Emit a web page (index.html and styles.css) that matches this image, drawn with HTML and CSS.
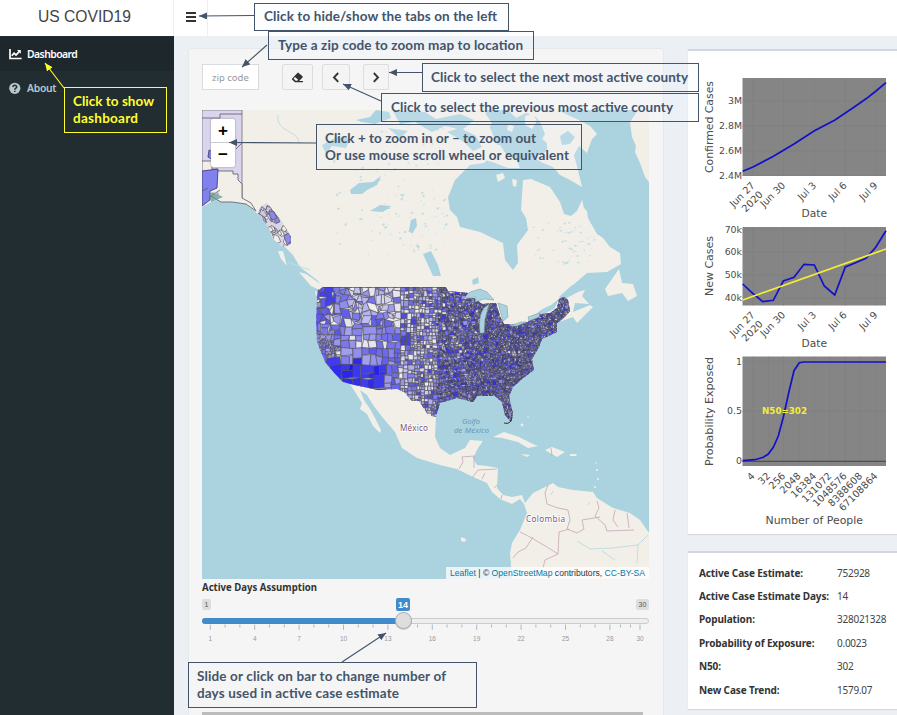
FILE: index.html
```html
<!DOCTYPE html>
<html lang="en">
<head>
<meta charset="utf-8">
<title>US COVID19</title>
<link rel="stylesheet" href="styles.css">
</head>
<body>
<header class="topbar">
  <div class="logo"><svg width="94" height="20"><text x="0" y="16" textLength="93" lengthAdjust="spacingAndGlyphs">US COVID19</text></svg></div>
  <button class="menu" aria-label="Menu"><i></i><i></i><i></i></button>
</header>
<div class="shell">
  <nav class="sidebar">
    <a class="tab active"><svg width="13" height="11" viewBox="0 0 13 11"><path d="M1 0V9.5H12.6" fill="none" stroke="#fff" stroke-width="1.7"/><path d="M2.8 6.7 5 4.2 7 6 10.2 2.6" fill="none" stroke="#fff" stroke-width="1.7"/><path d="M8 1H11.8V4.8Z" fill="#fff"/></svg><span class="dash">Dashboard</span></a>
    <a class="tab"><svg width="13" height="13" viewBox="0 0 13 13"><circle cx="5.8" cy="6.3" r="5.6" fill="#b8c7ce"/><path d="M3.9 5.1C3.9 2.7 7.8 2.8 7.7 5 7.6 6.3 5.8 6.2 5.8 7.8M5.8 8.7V10" fill="none" stroke="#222d32" stroke-width="1.5"/></svg><span>About</span></a>
  </nav>
  <main class="content">
    <section class="panel">
      <div class="tools">
        <div class="zip">zip code</div>
        <button class="btn erase" aria-label="Clear"><svg width="13" height="11" viewBox="0 0 13 11"><path d="M6.4.9Q7 .3 7.7.9L11.5 4.2Q12 4.8 11.5 5.4L8.2 8.9H12V10.2H4L1.2 7.8Q.6 7.2 1.2 6.5ZM4 5.1 2.6 6.8 4.7 8.8H6.2L7.2 7.8Z" fill="#333" fill-rule="evenodd"/></svg></button>
        <button class="btn prev" aria-label="Previous"><svg width="8" height="11" viewBox="0 0 8 11"><path d="M6.2 1 2 5.4 6.2 9.8" fill="none" stroke="#333" stroke-width="1.9"/></svg></button>
        <button class="btn next" aria-label="Next"><svg width="8" height="11" viewBox="0 0 8 11"><path d="M1.8 1 6 5.4 1.8 9.8" fill="none" stroke="#333" stroke-width="1.9"/></svg></button>
      </div>
      <div class="map">
        <svg id="map" width="447" height="469" viewBox="202 110 447 469">
          <defs>
            <clipPath id="us"><path d="M323 287H446L448 291 468 293 464 299 474 298 482 304 496 303 500 316 504 324 517 325 528 322 534 315 550 313 557 308 559 299 564 297 568 300 570 311 564 318 557 323 557 332 542 339 539 347 532 359 534 370 523 378 513 387 509 396 513 414 511 422 505 415 502 402 495 396 477 396 473 402 457 398 440 403 436 417 428 415 419 401 412 401 404 392 397 389 378 390 350 384 343 382 335 374 325 362 317 342 316 323 317 298 315 292Z"/></clipPath>
            <clipPath id="panhandle"><path d="M261 206 267 203 272 209 281 220 291 237 291 243 286 247 281 246 274 240 269 229 258 213Z"/></clipPath>
          </defs>
          <path fill="#aad3df" d="M202 110H649V579H202Z"/>
          <path fill="#f2efe9" d="M202 110H485L490 128 500 150 490 157 484 163 470 165 455 180 448 197 450 210 457 217 460 227 480 232 503 243 505 260 513 270 518 263 517 245 528 230 526 218 521 210 523 180 531 179 550 187 560 202 564 214 571 216 577 211 582 200 584 208 587 211 588 218 593 227 597 234 603 238 610 247 620 253 621 264 607 272 587 273 573 285 560 298 575 290 586 288 582 296 589 304 575 303 573 312 590 305 593 307 577 323 573 317 556 323 557 332 542 339 532 359 534 370 523 378 513 387 509 396 513 414 511 422 505 415 502 402 495 396 477 396 473 402 457 398 440 403 436 417 435 437 440 448 450 455 465 448 470 440 483 441 478 448 473 458 477 465 487 466 498 468 497 488 503 495 512 497 522 495 525 503 533 493 543 488 553 483 558 487 573 490 593 492 597 498 613 508 630 513 640 520 649 533V579H512L510 553 512 543 520 530 527 513 524 504 520 499 512 504 500 499 492 492 487 483 473 477 457 469 440 465 417 458 402 448 395 432 383 418 373 405 367 395 360 390 364 400 370 409 375 418 381 430 380 433 373 426 367 414 360 409 362 403 350 384 343 382 335 374 325 362 317 342 316 323 317 298 315 292 323 287 317 280 300 267 293 255 284 246 272 237 267 225 257 213 250 207 243 202 233 202 222 198 211 202 202 207Z"/>
          <g fill="#f2efe9">
            <path d="M505 110H560L575 118 590 126 597 134 592 139 587 153 579 146 574 155 578 170 582 187 570 180 560 175 553 167 543 163 534 158 547 151 547 143 540 137 540 127 528 119 515 124Z"/>
            <path d="M638 110 634 116 630 122 632 137 636 146 635 152 640 163 645 177 649 182V110ZM478 122 487 116 493 123 487 129ZM496 175 503 173 505 178 498 182ZM512 179 517 180 516 187 513 186ZM484 144 500 145 508 157 516 158 520 168 508 168 495 163 482 159Z"/>
            <path d="M619 269 612 279 605 289 608 296 622 293 628 301 637 296 633 284 622 283ZM585 280 595 282 593 286ZM278 251 283 251 287 266 281 259ZM299 272 306 274 322 285 322 291 311 286ZM493 437 504 432 519 437 533 444 538 446 528 448 518 442 502 438ZM545 450 552 447 565 452 557 457ZM521 454 530 455 527 457ZM570 454 577 454 576 456 570 456ZM461 537 466 539 465 542 461 541Z"/>
          </g>
          <g fill="#aad3df">
            <path d="M356 120 370 117 376 110 389 112 391 118 375 124 362 122ZM393 111 425 112 436 119 460 114 474 120 462 130 445 126 432 132 415 122 400 124ZM322 145 337 137 350 139 346 148 332 146 326 154ZM350 190 359 183 373 182 381 176 377 185 367 190 362 194 351 194ZM370 211 380 205 391 206 383 212ZM411 220 416 218 417 226 412 234 409 230ZM423 254 431 251 438 265 441 276 433 276ZM381 208 391 208 383 211ZM472 280 478 277 479 283 473 285Z"/>
            <path d="M485 110H508L516 118 526 113 536 117 541 124 545 134 540 143 530 146 520 140 511 146 500 139 494 128ZM558 110H582L596 116 606 122 598 127 586 122 572 117ZM560 136 568 131 575 137 570 144 562 145ZM447 132 460 128 476 136 482 147 473 151 464 142ZM388 128 408 131 400 138Z"/>
            <path d="M559 297 571 286 588 278 605 275 600 289 588 289 578 292 563 300Z"/>
            <path d="M535 315Q541 309 551 305L560 298 554 309 535 318Z"/>
          </g>
          <path fill="#f2efe9" d="M525 116 533 114 537 121 532 129 525 125ZM508 124 514 126 512 132 507 130Z"/>
          <g id="lakes" fill="#aad3df"></g>
          <path fill="none" stroke="#c2dde2" stroke-width="1" d="M288 262 310 270M577 541 590 549 612 548 638 545 648 535M602 551 615 560M638 545 637 563M551 495 553 491M588 505 590 502M278 115Q276 125 288 131T299 143"/>
          <g class="counties" clip-path="url(#us)"><g id="counties"></g></g>
          <g clip-path="url(#panhandle)"><path d="M255 200H295V250H255Z" fill="#d9d6e6"/><g id="islands"></g></g>
          <path fill="#dad4ec" stroke="#75707b" stroke-width=".8" d="M202 110H242V198L235 186 233 183 222 182 217 169H202Z"/>
          <path fill="#f2efe9" stroke="#5b5963" stroke-width=".8" d="M202 161H212V171H233V174H238V180L242 184V198L251 203 256 211 246 204 232 202H221L211 196 202 204Z"/>
          <path fill="#8280ec" stroke="#34326d" stroke-width=".8" d="M202 171 218 169 217 188 210 191V200L202 206ZM209 150 213 152 213 160 208 157Z"/>
          <path fill="none" stroke="#5b5963" stroke-width=".8" d="M202 118H220V114H242M242 143 236 149M202 191 208 188M211 196 220 190"/>
          <path fill="#5d9390" opacity=".7" d="M209 194 213 192 216 194 218 192 219 195 223 197 216 200 211 202Z"/>
          <path fill="#aad3df" stroke="#76929c" stroke-width=".5" d="M464 298 470 292 480 289 487 292 494 300 484 299 475 302 476 297ZM480 333Q478 316 484 308L489 304 485 319 484 333ZM498 303 507 306 508 317 503 321ZM509 326 521 322 526 322 517 326ZM528 317 540 313 539 317 529 321Z"/>
          <g fill="none" stroke="#c7a4b5" stroke-width=".8"><path d="M459 469 463 462 462 457 474 456V468M472 478 478 470 497 469M482 479 485 473M494 488 497 485M501 499 502 495M548 485 545 493 547 504 558 508 568 510 570 520 567 529 577 533 584 529 582 520 600 517M597 501 599 508 595 516 605 525 607 531 634 530M615 510 613 520 618 527M627 513 629 528M520 532 530 537 547 547 558 554 545 560 543 568M533 537 526 548 518 552 513 558M569 529 559 532 558 554M551 448 552 456"/></g>
          <g fill="#f2efe9"><circle cx="522" cy="425" r="1.4"/><circle cx="528" cy="417" r=".8"/><circle cx="597" cy="470" r="1"/><circle cx="598" cy="479" r="1"/><circle cx="595" cy="487" r="1"/><circle cx="596" cy="463" r=".8"/></g>
          <path d="M504 423Q511 425 512 417" stroke="#333" fill="none"/>
          <g class="place"><text x="400" y="431" textLength="28">México</text><text x="526" y="522" textLength="39">Colombia</text></g>
          <g class="sea"><text x="462" y="424" textLength="18">Golfo</text><text x="454" y="433" textLength="35">de México</text></g>
        </svg>
        <div class="zoom"><span>+</span><span>−</span></div>
        <div class="credit"><svg width="196" height="12"><text y="9" textLength="195" lengthAdjust="spacingAndGlyphs"><tspan class="link">Leaflet</tspan> | © <tspan class="link">OpenStreetMap</tspan> contributors, <tspan class="link">CC-BY-SA</tspan></text></svg></div>
      </div>
      <svg class="slider" id="slider" width="447" height="68" viewBox="202 579 447 68">
        <text class="slabel" x="202" y="591" textLength="115" lengthAdjust="spacingAndGlyphs">Active Days Assumption</text>
        <rect x="202" y="599" width="9" height="11" rx="2" fill="#ddd"/><text class="pill" x="206.5" y="607">1</text>
        <rect x="636" y="599" width="13" height="11" rx="2" fill="#ddd"/><text class="pill" x="642.5" y="607">30</text>
        <rect x="202.5" y="618.5" width="446" height="5" rx="2.5" fill="#eee" stroke="#ccc"/>
        <path d="M205 618H404V624H205A3 3 0 0 1 205 618" fill="#428bca"/>
        <g id="ticks"></g>
        <circle cx="403.5" cy="621.5" r="8.5" fill="#aaa" opacity=".5"/><circle cx="403.5" cy="620.5" r="8" fill="#dedede" stroke="#aaa"/>
        <rect x="396" y="598" width="14" height="13" rx="2" fill="#428bca"/><text class="pill now" x="403" y="608">14</text>
      </svg>
      <div class="scroll"></div>
    </section>
    <aside class="side">
      <section class="card charts"><svg id="charts" width="209" height="483" viewBox="688 51 209 483"></svg></section>
      <section class="card stats">
        <dl>
          <dt>Active Case Estimate:</dt><dd>752928</dd>
          <dt>Active Case Estimate Days:</dt><dd>14</dd>
          <dt>Population:</dt><dd>328021328</dd>
          <dt>Probability of Exposure:</dt><dd>0.0023</dd>
          <dt>N50:</dt><dd>302</dd>
          <dt>New Case Trend:</dt><dd>1579.07</dd>
        </dl>
      </section>
    </aside>
  </main>
</div>
<svg class="notes" width="897" height="715" viewBox="0 0 897 715">
  <defs>
    <marker id="a" markerUnits="userSpaceOnUse" markerWidth="10" markerHeight="8" refX="8" refY="3.5" orient="auto"><path d="M0 0 8 3.5 0 7Z" fill="#44546a"/></marker>
    <marker id="y" markerUnits="userSpaceOnUse" markerWidth="10" markerHeight="8" refX="8" refY="3.5" orient="auto"><path d="M0 0 8 3.5 0 7Z" fill="#ffff2d"/></marker>
  </defs>
  <g class="boxes">
    <rect x="254.5" y="3.5" width="254" height="27"/><rect x="268.5" y="31.5" width="265" height="28"/><rect x="422.5" y="63.5" width="276" height="28"/><rect x="381.5" y="93.5" width="317" height="28"/><rect x="316.5" y="124.5" width="265" height="45"/><rect class="solid" x="188.5" y="662.5" width="288" height="45"/>
  </g>
  <g class="arrows">
    <path d="M254 15.5 199 16" marker-end="url(#a)"/><path d="M267 45 242 67" marker-end="url(#a)"/><path d="M422 72.5H389" marker-end="url(#a)"/><path d="M381 101 343 84" marker-end="url(#a)"/><path d="M316 143 229 142.5" marker-end="url(#a)"/><path d="M342 662 386 633" marker-end="url(#a)"/>
  </g>
  <g class="words">
    <text x="264" y="21" textLength="233">Click to hide/show the tabs on the left</text>
    <text x="278" y="50" textLength="245">Type a zip code to zoom map to location</text>
    <text x="431" y="82" textLength="257">Click to select the next most active county</text>
    <text x="391" y="112" textLength="282">Click to select the previous most active county</text>
    <text x="325" y="143" textLength="211">Click + to zoom in or – to zoom out</text>
    <text x="325" y="160" textLength="244">Or use mouse scroll wheel or equivalent</text>
    <text x="197" y="681" textLength="249">Slide or click on bar to change number of</text>
    <text x="197" y="698" textLength="202">days used in active case estimate</text>
  </g>
  <rect x="64.5" y="87.5" width="102" height="45" fill="none" stroke="#ffff2d"/>
  <path d="M64 88 45 63" stroke="#ffff2d" stroke-width="1.1" marker-end="url(#y)"/>
  <g class="words yellow"><text x="73" y="106" textLength="81">Click to show</text><text x="73" y="123" textLength="65">dashboard</text></g>
</svg>
<script src="script.js"></script>
</body>
</html>
```
FILE: styles.css
```css
* { box-sizing: border-box; }
body { margin: 0; width: 897px; height: 715px; overflow: hidden; background: #ecf0f5; font-family: "Noto Sans", sans-serif; color: #333; position: relative; }
svg { display: block; }
button { padding: 0; font: inherit; }
.topbar { display: flex; height: 36px; background: #fff; }
.logo { width: 174px; padding: 6px 0 0 38px; border-right: 1px solid #eee; font-family: "Liberation Sans", sans-serif; font-size: 16px; }
.logo text { fill: #444; }
.menu { width: 34px; border: 0; border-right: 1px solid #eee; background: none; display: flex; flex-direction: column; gap: 2px; padding: 12px 0 0 12px; }
.menu i { width: 10px; height: 2px; background: #333; }
.shell { display: flex; height: 679px; }
.sidebar { width: 174px; background: #222d32; padding-top: 1px; }
.tab { height: 34px; display: flex; align-items: center; gap: 5px; padding-left: 9px; font-size: 10.4px; font-weight: 600; color: #b8c7ce; letter-spacing: -.3px; }
.tab svg { flex: none; }
.dash { letter-spacing: -.55px; }
.active { background: #1e282c; color: #fff; }
.content { flex: 1; display: flex; padding: 12px 0 0 14px; gap: 24px; }
.panel { width: 476px; height: 680px; padding: 15px 14px 0 13px; border: 1px solid #e6e8ea; border-radius: 3px; background: #f5f5f5; overflow: hidden; }
.tools { display: flex; height: 26px; margin-bottom: 20px; }
.zip { width: 57px; border: 1px solid #d8dbe0; background: #fff; padding-left: 9px; font-size: 9.5px; line-height: 25px; color: #999; white-space: nowrap; overflow: hidden; }
.btn { border: 1px solid #ddd; border-radius: 2px; background: #f4f4f4; display: flex; align-items: center; justify-content: center; }
.erase { width: 31px; margin-left: 23px; }
.prev { width: 28px; margin-left: 9px; }
.next { width: 26px; margin-left: 13px; }
.map { position: relative; width: 447px; height: 469px; overflow: hidden; }
.place text { font: 8.2px "Noto Sans", sans-serif; fill: #805676; stroke: #fff; stroke-width: 1.4px; paint-order: stroke; }
.sea text { font: italic 7.6px "Noto Sans", sans-serif; fill: #6597b5; }
.zoom { position: absolute; left: 9px; top: 9px; width: 24px; border-radius: 2px; background: #fff; box-shadow: 0 0 2px #888; font: bold 17px/23px "Liberation Sans", sans-serif; color: #000; text-align: center; }
.zoom span { display: block; height: 24px; }
.zoom span:first-child { border-bottom: 1px solid #ccc; }
.credit { position: absolute; right: 0; bottom: 0; height: 12px; padding-left: 4px; width: 203px; background: rgba(255,255,255,.75); font: 8.5px "Liberation Sans", sans-serif; }
.credit text { fill: #333; }
.credit .link { fill: #0078a8; }
.slabel { font: 700 10.4px "Noto Sans", sans-serif; fill: #333; }
.pill { font: 7px "Liberation Sans", sans-serif; fill: #555; text-anchor: middle; }
.now { font-size: 9px; font-weight: bold; fill: #fff; }
.tick { font: 6.5px "Liberation Sans", sans-serif; fill: #999; text-anchor: middle; }
.scroll { height: 4px; width: 441px; margin-top: 65px; background: #bcbcbc; }
.side { width: 209px; padding-top: 1px; flex: none; }
.card { background: #fff; border-top: 2px solid #d2d6de; box-shadow: 0 1px 1px rgba(0,0,0,.1); }
.charts { height: 485px; margin-bottom: 17px; }
.charts text { font: 11px "DejaVu Sans", sans-serif; fill: #4c4c4c; }
.charts .t { font-size: 9.4px; }
.charts .r { font-size: 9.8px; }
.charts .mark { font-size: 9.5px; font-weight: bold; fill: #f5ee35; }
.stats { height: 158px; padding: 8px 0 0 11px; }
dl { margin: 0; display: grid; grid-template-columns: 138px 1fr; grid-auto-rows: 23.4px; align-items: center; font-size: 10px; white-space: nowrap; }
dt { font-weight: 700; letter-spacing: -.12px; }
dd { margin: 0; letter-spacing: -.25px; color: #444; }
.notes { position: absolute; left: 0; top: 0; pointer-events: none; }
.boxes rect { fill: rgba(240,244,255,.2); stroke: #44546a; }
.boxes .solid { fill: #f5f5f5; }
.arrows path { stroke: #44546a; stroke-width: 1.1; }
.words text { font: 700 13.5px Lato, sans-serif; fill: #44546a; }
.words.yellow text { fill: #ffff2d; }
```
FILE: script.js
```js
let seed = 19;
const rnd = () => (seed = (seed * 16807) % 2147483647) / 2147483647;
const put = (id, html) => { document.getElementById(id).innerHTML = html; };

// County mesh: recursive subdivision, finer toward the east.
const warp = (x, y) => {
  const k = x < 400 ? (y > 325 ? 0.9 : 2) : x < 440 ? 0.4 : 0.8;
  return (x + Math.sin(y * 1.9 + x * 0.7) * k).toFixed(1) + ' ' + (y + Math.sin(x * 1.7 - y * 0.6) * k).toFixed(1);
};
const near = (x, y, cx, cy, r) => Math.hypot(x - cx, y - cy) < r;
function shade(x, y) {
  let v = 0.35 + rnd() * 0.35;
  if (x < 385 && y > 361) v = 0.8 + rnd() * 0.2;
  else if (near(x, y, 330, 297, 8)) v = 0.8;
  else if (near(x, y, 404, 341, 7)) v = 0.8;
  else if (x > 350 && x < 403 && y < 320) v = rnd() * 0.6;
  else if (x >= 400 && x < 437) v = Math.pow(rnd(), 1.4) * 0.8;
  else if (x > 437) v = 0.3 + rnd() * 0.6;
  if (rnd() < 0.1 && y < 358) v = 0.05;
  const mix = (a, b) => Math.round(a + (b - a) * v);
  return `rgb(${mix(242, 25)},${mix(239, 20)},${mix(238, 235)})`;
}
let cells = '';
function split(x, y, w, h) {
  const cx = x + w / 2, cy = y + h / 2;
  let s = cx < 345 ? 7 : cx < 400 ? 8 : cx < 412 ? 5.5 : cx < 438 ? 4.2 : cx < 470 ? 3.3 : 2.6;
  if (cx > 340 && cx < 375 && cy > 325) s = 11;
  if (near(cx, cy, 330, 350, 10)) s = 4;
  if (cx < 380 && cy > 358) s = 13;
  s *= 0.75 + rnd() * 0.7;
  if (Math.max(w, h) > s) {
    const t = 0.35 + rnd() * 0.3;
    if (w > h) { split(x, y, w * t, h); split(x + w * t, y, w * (1 - t), h); }
    else { split(x, y, w, h * t); split(x, y + h * t, w, h * (1 - t)); }
    return;
  }
  const east = cx > 438;
  cells += `<path d="M${warp(x, y)}L${warp(x + w, y)}L${warp(x + w, y + h)}L${warp(x, y + h)}Z" fill="${shade(cx, cy)}" stroke="${east ? '#46464c' : '#50505a'}" stroke-width="${east ? 0.58 : 0.65}"/>`;
}
split(310, 286, 265, 140);
put('counties', cells + '<path d="M323 287.3H446" stroke="#444" stroke-width=".8"/>');

let isl = '';
for (let i = 0; i < 70; i++) {
  const x = 256 + rnd() * 36, y = 203 + rnd() * 44, r = 1.5 + rnd() * 2.5;
  isl += `<path d="M${x} ${y}l${r} ${r * 0.5} ${r * 0.6} ${r * 1.4} ${-r} ${r * 0.4} ${-r} ${-r}Z" fill="${rnd() < 0.3 ? '#8d88e3' : rnd() < 0.5 ? '#f2efe9' : '#ccc9e3'}" stroke="#4d4c55" stroke-width=".6"/>`;
}
isl += '<path d="M269 211 274 212 277 218 273 220 270 217ZM284 236 289 233 292 240 287 245Z" fill="#8d88e3" stroke="#4d4c55" stroke-width=".6"/>';
put('islands', isl);

// Small northern lakes.
let lakes = '';
for (let i = 0; i < 200; i++) {
  const x = 325 + rnd() * 135, y = 125 + rnd() * 130, r = 0.4 + rnd() * 1.1;
  if (x < 370 && rnd() < 0.7 || x > 446) continue;
  lakes += `<path d="M${x} ${y}l${r * 1.4} ${-r * 1.3} ${r} ${r * 0.6} ${-r} ${r * 1.4}Z" opacity=".7"/>`;
}
for (let i = 0; i < 60; i++) {
  const x = 532 + rnd() * 62, y = 222 + rnd() * 44, r = 0.4 + rnd();
  lakes += `<path d="M${x} ${y}l${r * 1.6} ${-r} ${r} ${r * 0.6} ${-r} ${r}Z" opacity=".7"/>`;
}
put('lakes', lakes);

let ticks = '';
for (let d = 1; d <= 28; d++) {
  const x = 210.3 + (d - 1) * 14.8, big = (d - 1) % 3 === 0;
  ticks += `<path d="M${x} 624.5v${big ? 5.5 : 3}" stroke="#a9b3bd" stroke-width=".9"/>`;
  if (big) ticks += `<text class="tick" x="${x}" y="641">${d}</text>`;
}
ticks += '<path d="M620.5 624.5v3M630.5 624.5v3M640 624.5v5.5" stroke="#a9b3bd" stroke-width=".9"/><text class="tick" x="640" y="641">30</text>';
put('ticks', ticks);

// Charts.
const X = [753, 783.5, 814.3, 845, 875.7];
const dates = ['Jun 27', 'Jun 30', 'Jul 3', 'Jul 6', 'Jul 9'];
function chart(top, bottom, xs, ys) {
  let s = `<rect x="742.5" y="${top}" width="143.5" height="${bottom - top}" fill="#858585"/><path d="`;
  xs.forEach(x => { s += `M${x} ${top}V${bottom}`; });
  ys.forEach(([y]) => { s += `M742.5 ${y}H886`; });
  s += '" stroke="#7f7f7f" stroke-width=".7"/>';
  ys.forEach(([y, l]) => { s += `<text class="t" x="742" y="${y + 3.4}" text-anchor="end">${l}</text>`; });
  return s;
}
const rot = (x, y, l) => `<text class="t r" text-anchor="end" transform="translate(${x} ${y}) rotate(-45)">${l}</text>`;
const line = (p, c) => `<polyline points="${p}" fill="none" stroke="${c}" stroke-width="1.7"/>`;
const title = (l, x, y, w) => `<text x="${x}" y="${y}" textLength="${w}" lengthAdjust="spacingAndGlyphs">${l}</text>`;
const side = (l, y, w) => `<text transform="translate(713 ${y}) rotate(-90)" textLength="${w}" lengthAdjust="spacingAndGlyphs">${l}</text>`;
let c = chart(78, 176, X, [[101, '3M'], [126, '2.8M'], [151, '2.6M'], [175.5, '2.4M']]);
c += line('742.7,171.3 753,167 773,156.5 794,144 814,131 835,120 855,106.5 866.7,98.3 876,91 886,82.7', '#1410c8');
c += chart(227, 305.5, X, [[229.7, '70k'], [252, '60k'], [275, '50k'], [298, '40k']]);
c += line('742.7,284 753,293.5 762.7,301.7 773.3,300.3 783.3,281 794,277.3 804,264.3 814.3,265 824.3,286 834.7,295 845.3,267 855,263 866,258.3 875.7,247.3 886,230.7', '#1410c8');
c += line('742.7,300 886,249', '#f5ee35');
[186, 315.5].forEach(y => {
  X.forEach((x, i) => { c += rot(x + 2.5, y, dates[i]); });
  c += rot(763.5, y + 9, '2020');
  c += title('Date', 801.5, y + 31, 25.5);
});
const P = X.flatMap((x, i) => i < 4 ? [x, x + 15.4] : [x]);
c += chart(356.5, 466, P, [[361.7, '1'], [411, '0.5'], [461, '0']]);
c += '<path d="M742.5 461.3H886" stroke="#444"/>';
c += line('742.7,460.7 755,459.7 763.3,457.3 768.3,454 773.3,447.3 778.3,436 783.3,417.3 788.7,392.7 794,370.7 799.3,362.7 804,362 886,362', '#1410c8');
c += '<text class="mark" x="762" y="414" textLength="45" lengthAdjust="spacingAndGlyphs">N50=302</text>';
['4', '32', '256', '2048', '16384', '131072', '1048576', '8388608', '67108864'].forEach((l, i) => { c += rot(P[i] + 2.5, 476.5, l); });
c += side('Confirmed Cases', 173, 92) + side('New Cases', 296, 60) + side('Probability Exposed', 466, 109);
c += title('Number of People', 765.5, 523.5, 97.5);
put('charts', c);
```
